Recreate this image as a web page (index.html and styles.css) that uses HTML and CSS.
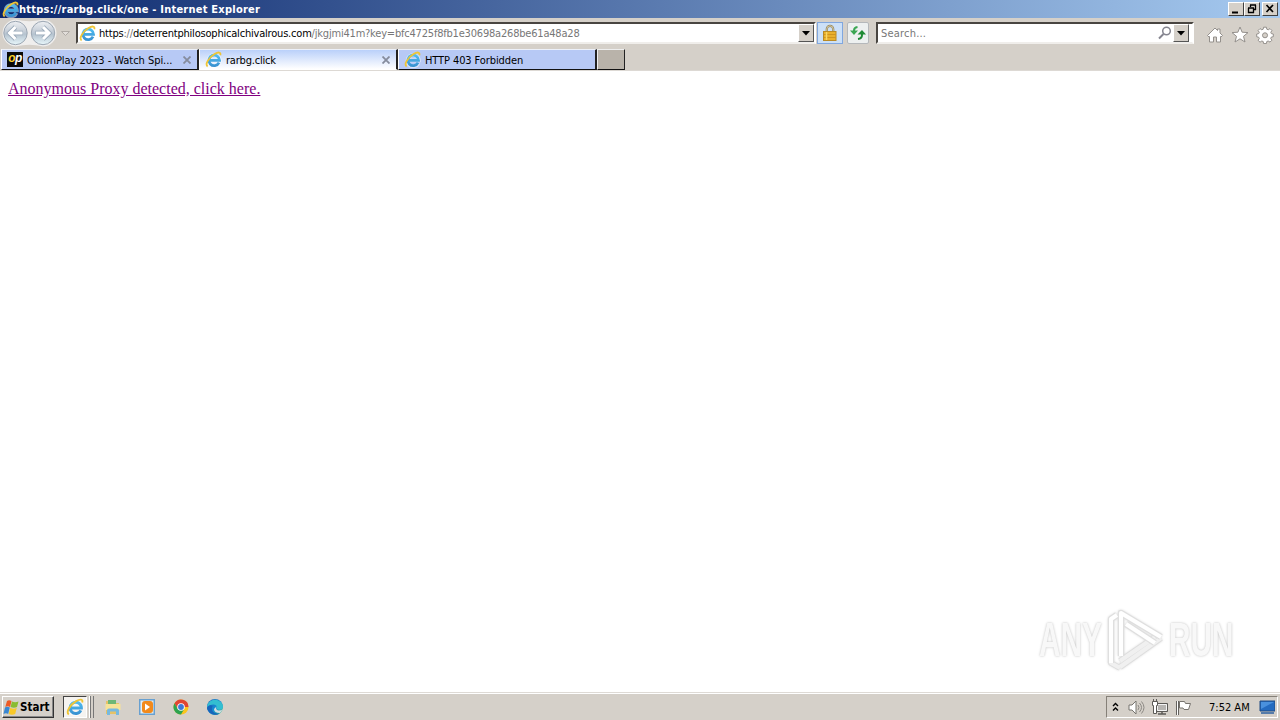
FILE: index.html
```html
<!DOCTYPE html>
<html lang="en">
  <head>
    <meta charset="UTF-8" />
    <title>https://rarbg.click/one - Internet Explorer</title>
    <link rel="stylesheet" href="styles.css">
  </head>
  <body>
    <svg class="defs" width="0" height="0">
      <defs>
        <linearGradient id="blue" x1="0" y1="0" x2="0" y2="1">
          <stop offset="0" stop-color="#4fbcf0" />
          <stop offset="1" stop-color="#3a93d2" />
        </linearGradient>
        <linearGradient id="glass" x1="0" y1="0" x2="0" y2="1">
          <stop offset="0" stop-color="#eef0f3" />
          <stop offset="0.45" stop-color="#c3ccd6" />
          <stop offset="0.55" stop-color="#b5c3cf" />
          <stop offset="1" stop-color="#e8f7fb" />
        </linearGradient>
        <linearGradient id="edge" x1="0" y1="0" x2="1" y2="1">
          <stop offset="0" stop-color="#1f55b5" />
          <stop offset="0.55" stop-color="#168ed4" />
          <stop offset="1" stop-color="#4bcf83" />
        </linearGradient>
        <symbol id="ie" viewBox="0 0 16 16">
          <path d="M13.600 11.200A5.300 5.300 0 1 1 14 8.900H5" fill="none" stroke="#fff" stroke-width="3.600" opacity=".5" />
          <path d="M13.200 11A5 5 0 1 1 13.700 8.900H5" fill="none" stroke="url(#blue)" stroke-width="2.600" />
          <path d="M2.500 14.500C-.5 13 3.500 6 9 2.800C12.500.8 15.300.8 14.400 4" fill="none" stroke="#efc535" stroke-width="1.700" />
        </symbol>
      </defs>
    </svg>

    <div class="titlebar">
      <svg class="ie-icon" width="17" height="17"><use href="#ie" /></svg>
      <span class="title">https://rarbg.click/one - Internet Explorer</span>
      <div class="window-buttons">
        <span class="win-btn"><svg width="14" height="12"><path d="M3 9.500h6" stroke="#000" stroke-width="2" /></svg></span>
        <span class="win-btn restore"><svg width="14" height="12"><path d="M5 2h6M5.500 2v2M10.500 2v5M8 6.500h3M3 5h6M3.500 5v5M8.500 5v5M3 9.500h6" stroke="#000" fill="none" stroke-width="1.300" /></svg></span>
        <span class="win-btn"><svg width="14" height="12"><path d="M3.500 2l6.500 7M10 2l-6.500 7" stroke="#000" stroke-width="1.700" /></svg></span>
      </div>
    </div>

    <div class="navbar">
      <svg class="arrows" width="74" height="30" viewBox="0 0 74 30">
        <path d="M16 1.500Q29 5 43 1.500A13.500 13.500 0 0 1 43 28.500Q29 25 16 28.500A13.500 13.500 0 0 1 16 1.500" fill="#efeeed" />
        <circle cx="15.500" cy="15" r="11.700" fill="url(#glass)" stroke="#9ca7b3" />
        <circle cx="43" cy="15" r="11.700" fill="url(#glass)" stroke="#9ca7b3" />
        <path d="M23 15H10M15.500 9l-6 6 6 6" fill="none" stroke="#98a8b8" stroke-width="4.600" />
        <path d="M22.500 15H10M15.500 9l-6 6 6 6" fill="none" stroke="#fff" stroke-width="3" />
        <path d="M35.500 15H48.500M43 9l6 6-6 6" fill="none" stroke="#98a8b8" stroke-width="4.600" />
        <path d="M36 15H48.500M43 9l6 6-6 6" fill="none" stroke="#fff" stroke-width="3" />
        <path d="M61.500 13.500h8l-4 4z" fill="#e2deda" stroke="#b0aba6" />
      </svg>
      <div class="field address">
        <svg class="ie-icon" width="17" height="17"><use href="#ie" /></svg>
        <span class="url">https<i>://</i>deterrentphilosophicalchivalrous.com<i>/jkgjmi41m?key=bfc4725f8fb1e30698a268be61a48a28</i></span>
        <span class="drop"><svg width="9" height="5"><path d="M0 0h8L4 4.500z" /></svg></span>
      </div>
      <span class="tool lock">
        <svg width="16" height="18" viewBox="0 0 16 18">
          <path d="M4.800 8V5a3.200 3.200 0 0 1 6.400 0V8" fill="none" stroke="#8f8058" stroke-width="2.200" />
          <path d="M4.800 8V5a3.200 3.200 0 0 1 6.400 0V8" fill="none" stroke="#e9deb8" stroke-width=".8" />
          <rect x="1.500" y="7.500" width="12.500" height="9" fill="#eab02c" stroke="#b98a26" />
          <path d="M2 10.500h12M2 13.500h12" stroke="#d0951f" />
          <path d="M4.500 8v8" stroke="#f8d765" stroke-width="1.500" />
        </svg>
      </span>
      <span class="tool refresh">
        <svg width="18" height="18" viewBox="0 0 18 18">
          <path d="M8.500 3Q5 3.500 5 6.500V8" fill="none" stroke="#3aa652" stroke-width="2" />
          <path d="M1 6.500h8L5 11z" fill="#3aa652" />
          <path d="M9 15Q13 14.500 13 11V9" fill="none" stroke="#208b36" stroke-width="2" />
          <path d="M8.500 10.500L13 6l4 4.500z" fill="#208b36" />
        </svg>
      </span>
      <div class="field search">
        <span class="placeholder">Search...</span>
        <svg width="14" height="14" viewBox="0 0 14 14"><circle cx="8.500" cy="5" r="3.800" fill="none" stroke="#85858f" stroke-width="1.500" /><path d="M5.500 8L1 12.500" stroke="#85858f" stroke-width="2" /></svg>
        <span class="drop"><svg width="9" height="5"><path d="M0 0h8L4 4.500z" /></svg></span>
      </div>
      <div class="commands">
        <svg width="18" height="18" viewBox="0 0 18 18"><path d="M1.500 9.500L9 2l2.500 2.500V3h2.500v4l2.500 2.500-1.500 1.500-.5-.5V16h-4v-5h-3v5h-4v-5.500l-.5.500z" fill="#fff" stroke="#94908c" /></svg>
        <svg width="18" height="18" viewBox="0 0 18 18"><path d="M9 1l2.100 5.200 5.900.4-4.500 3.700L14 16l-5-3.200L4 16l1.500-5.700L1 6.600l5.900-.4z" fill="#fff" stroke="#94908c" /></svg>
        <svg width="18" height="18" viewBox="0 0 18 18">
          <path d="M7.600 1.200h2.800l.4 2 1.400.6 1.800-1.200 1.900 1.900-1.100 1.800.5 1.300 2 .4v2.700l-2 .4-.6 1.400 1.200 1.700-1.900 1.900-1.800-1.100-1.400.5-.4 2.100H7.600l-.4-2.100-1.400-.5L4 16.200l-1.900-1.900 1.200-1.800-.6-1.300-2-.4V8l2-.4.6-1.300-1.200-1.800L4 2.600l1.800 1.200 1.400-.6z" fill="#fff" stroke="#94908c" />
          <circle cx="9" cy="9.300" r="2.500" fill="#d5d0c9" stroke="#94908c" />
        </svg>
      </div>
    </div>

    <div class="tabs">
      <div class="tab first">
        <span class="op-icon"><b>o</b>p</span>
        <span class="tab-text onion">OnionPlay 2023 - Watch Spi...</span>
        <svg class="close" width="8" height="8"><path d="M.5.500l7 7M7.500.500l-7 7" stroke="#858c9d" stroke-width="1.800" /></svg>
      </div>
      <div class="tab active">
        <svg class="ie-icon" width="17" height="17"><use href="#ie" /></svg>
        <span class="tab-text rarbg">rarbg.click</span>
        <svg class="close" width="8" height="8"><path d="M.5.500l7 7M7.500.500l-7 7" stroke="#858c9d" stroke-width="1.800" /></svg>
      </div>
      <div class="tab">
        <svg class="ie-icon" width="17" height="17"><use href="#ie" /></svg>
        <span class="tab-text forbidden">HTTP 403 Forbidden</span>
      </div>
      <div class="new-tab"></div>
    </div>

    <main class="page">
      <a href="#">Anonymous Proxy detected, click here.</a>
      <div class="watermark">
        <span class="any">ANY</span>
        <svg width="60" height="66" viewBox="0 0 60 66">
          <g fill="none" stroke-linejoin="round">
            <path d="M14 60l41-29M14 54l35-24M5 13v43l9 5" stroke="#dedede" stroke-width="6" />
            <path d="M14 60l41-29M14 54l35-24M5 13v43l9 5" stroke="#f0f0f0" stroke-width="4" />
            <path d="M5 56V12l6-4M15 49V6l40 24M20 17l29 19" stroke="#dfdfdf" stroke-width="6.500" />
            <path d="M5 56V12l6-4M15 49V6l40 24M20 17l29 19" stroke="#fff" stroke-width="4" />
          </g>
        </svg>
        <span class="run">RUN</span>
      </div>
    </main>

    <div class="taskbar">
      <div class="start">
        <svg width="17" height="17" viewBox="0 0 17 17">
          <path d="M4 2Q6 .5 8.500 2L7 8Q5 6.500 2.300 8z" fill="#ed5a25" />
          <path d="M9 2.500Q12 4 15.500 2.500L14 8Q11 9.500 7.500 8z" fill="#8abc32" />
          <path d="M2 8.500Q4 7 6.800 8.500L5.200 15Q3 13.500.5 15z" fill="#3987d2" />
          <path d="M7.300 8.800Q10.500 10.500 13.800 8.800L12.200 15Q9 16.500 5.700 15z" fill="#f9c929" />
        </svg>
        <b>Start</b>
      </div>
      <div class="task-ie"><div class="task-face"><svg width="18" height="18"><use href="#ie" /></svg></div><i></i><i></i></div>
      <div class="launch">
        <svg width="18" height="18" viewBox="0 0 18 18">
          <path d="M2 3h5l1 2h7v11H2z" fill="#e6c267" />
          <path d="M4 2h8v4H4z" fill="#6db776" />
          <path d="M1.500 6h15v6h-15z" fill="#f6e398" />
          <path d="M3 17v-4.500q0-2 2-2h8q2 0 2 2V17h-3v-3.500H6V17z" fill="#77b9df" />
        </svg>
        <svg width="18" height="18" viewBox="0 0 18 18">
          <rect x="1" y="1" width="16" height="16" fill="#68a0d0" />
          <rect x="2.500" y="2.500" width="13" height="13" fill="#e4eff5" />
          <rect x="4" y="3" width="11" height="12" rx="3" fill="#f28a1c" />
          <path d="M7 5.500v7l5-3.500z" fill="#fff" />
        </svg>
        <svg width="18" height="18" viewBox="0 0 18 18">
          <circle cx="9" cy="9" r="7.500" fill="#fbc51d" />
          <path d="M9 9H16.500A7.500 7.500 0 0 0 2.500 5.250L5.700 10.900z" fill="#e04434" />
          <path d="M2.500 5.250A7.500 7.500 0 0 0 9 16.500L12.200 10.900H5.800z" fill="#2da350" />
          <circle cx="9" cy="9" r="3.800" fill="#fff" />
          <circle cx="9" cy="9" r="2.900" fill="#3c78d8" />
        </svg>
        <svg width="18" height="18" viewBox="0 0 18 18">
          <circle cx="9" cy="9" r="8" fill="url(#edge)" />
          <path d="M1 9C2 0 15-1 17 8.500C17 13 10 12 10.500 10C12 8 8 4 1 9" fill="#33bed1" />
          <path d="M6.500 8C4 13 9 17 14 15C10 19 2 16 1 10Q3 6 6.500 8" fill="#1765bb" />
          <path d="M10.500 8.500Q9 11 12 12.500Q15 13 17 11L14 15Q8 15 8 11z" fill="#d6dce0" />
        </svg>
      </div>
      <div class="tray">
        <svg width="7" height="10"><path d="M1 4l2.500-2.500L6 4M1 8.500L3.500 6 6 8.500" fill="none" stroke="#000" stroke-width="1.400" /></svg>
        <svg width="18" height="17" viewBox="0 0 18 17"><path d="M2 6h3l4-4v13l-4-4H2z" fill="#fff" stroke="#77746f" /><path d="M11 6q2 2.500 0 5M12.500 4q4 4.500 0 9M14.500 2.500q5 6 0 12" fill="none" stroke="#8c8984" /></svg>
        <svg width="18" height="17" viewBox="0 0 18 17"><path d="M5.500 4.500h11v8h-11z" fill="#b7b5b2" stroke="#5c5a57" /><path d="M6.500 5.500h9v6h-9z" fill="none" stroke="#f4f4f4" /><path d="M7 15h8M11 13v2" stroke="#5c5a57" stroke-width="1.500" /><path d="M1.500 2.500h5v4h-1v8h-3v-8h-1zM2.500 0v2M5.500 0v2" fill="#fff" stroke="#5c5a57" /></svg>
        <svg width="18" height="17" viewBox="0 0 18 17"><path d="M2.500 2v14" stroke="#65625e" stroke-width="3" /><path d="M2.500 2v14" stroke="#fff" /><path d="M4.500 2.500h5l1 2h5l-2 6H9l-1-1.500H4.500z" fill="#fff" stroke="#77746f" /></svg>
        <span class="clock">7:52 AM</span>
        <svg width="16" height="16" viewBox="0 0 16 16"><path d="M1 2h15v10H1z" fill="#246bc0" stroke="#204c82" /><path d="M2 3h13L2 10z" fill="#4a91dd" /><path d="M2 14h13" stroke="#567caa" stroke-width="2" /></svg>
      </div>
    </div>
  </body>
</html>
```

FILE: styles.css
```css
* {
  box-sizing: border-box;
}
body {
  margin: 0;
  width: 1280px;
  height: 720px;
  overflow: hidden;
  display: flex;
  flex-direction: column;
  background: #d5d0c9;
  color: #000;
  font-family: "DejaVu Sans Condensed", "DejaVu Sans", sans-serif;
  font-stretch: condensed;
  font-size: 11px;
  white-space: nowrap;
}
svg {
  display: block;
  flex: none;
}
.defs {
  position: absolute;
}
i {
  font-style: normal;
}
.titlebar {
  height: 18px;
  display: flex;
  align-items: center;
  padding: 0 2px;
  background: linear-gradient(90deg, #0b276c, #a6caf0);
}
.title {
  width: 241px;
  color: #fff;
  font-weight: bold;
  font-size: 11px;
  letter-spacing: 0.23px;
}
.window-buttons {
  display: flex;
  margin-left: auto;
}
.win-btn {
  width: 16px;
  height: 14px;
  border: 1px solid;
  border-color: #fff #404040 #404040 #fff;
  background: #d5d0c9;
  overflow: hidden;
}
.restore {
  margin-right: 2px;
}
.navbar {
  height: 30px;
  display: flex;
  align-items: center;
}
.arrows {
  margin-right: 2px;
}
.field {
  height: 22px;
  display: flex;
  align-items: center;
  background: #fff;
  border: 2px solid;
  border-color: #494541 #fff #f0eeeb #494541;
}
.address {
  width: 740px;
  padding-left: 1px;
}
.url {
  margin: 1px 0 0 3px;
  letter-spacing: -0.2px;
}
.url i,
.placeholder {
  color: #777;
}
.drop {
  width: 16px;
  height: 18px;
  display: flex;
  align-items: center;
  justify-content: center;
  background: #d5d0c9;
  border: 1px solid;
  border-color: #fff #555 #555 #fff;
}
.address .drop {
  margin-left: auto;
}
.tool {
  display: flex;
  align-items: center;
  justify-content: center;
  height: 22px;
}
.lock {
  width: 26px;
  margin-left: 1px;
  background: #cce0f7;
  border: 1px solid #80a7df;
}
.refresh {
  width: 22px;
  margin: 0 7px 0 4px;
  background: #edf0f0;
  border: 1px solid #b5b8bb;
  border-radius: 2px;
}
.search {
  width: 318px;
  padding: 0 3px;
}
.placeholder {
  flex: 1;
  margin-top: 1px;
  letter-spacing: 0.2px;
}
.search .drop {
  margin-left: 1px;
}
.commands {
  display: flex;
  gap: 7px;
  margin: 3px 0 0 12px;
}
.tabs {
  height: 23px;
  display: flex;
  padding: 1px 0 1px 1px;
  border-bottom: 1px solid #ddd9d4;
}
.tab {
  width: 199px;
  height: 21px;
  display: flex;
  align-items: center;
  padding: 0 6px 0 5px;
  background: #b7c9f5;
  border: 1px solid;
  border-color: #edf1fa #222 #111 #fff;
  border-right-width: 2px;
}
.first {
  width: 198px;
}
.active {
  background: linear-gradient(#bad0fa, #fff);
  border-bottom-color: #fff;
}
.op-icon {
  width: 16px;
  height: 15px;
  background: #090909;
  color: #fff;
  font: italic bold 12px/12px "Liberation Sans", sans-serif;
  letter-spacing: -0.5px;
  text-align: center;
}
.op-icon b {
  color: #ffd12b;
}
.tab-text {
  margin: 1px 0 0 4px;
  letter-spacing: -0.1px;
}
.onion {
  letter-spacing: -0.04px;
}
.rarbg {
  letter-spacing: -0.2px;
}
.close {
  margin-left: auto;
}
.new-tab {
  width: 28px;
  height: 21px;
  background: #b9b3aa;
  border: 1px solid;
  border-color: #eee #222 #111 #eee;
}
.page {
  height: 621px;
  flex: none;
  padding: 8px;
  display: flex;
  flex-direction: column;
  align-items: flex-start;
  justify-content: space-between;
  background: #fff;
  font: 16px/19px "Liberation Serif", serif;
}
.page a {
  color: #800080;
}
.watermark {
  display: flex;
  align-items: center;
  align-self: flex-end;
  width: 203px;
  height: 66px;
  margin: 0 32px 11px 0;
  font: bold 48px/70px "Liberation Sans", sans-serif;
  color: #f8f8f8;
  text-shadow: 0 0 3px #bbb;
}
.any,
.run {
  width: 64px;
  flex: none;
  transform: scaleX(0.62);
  transform-origin: left;
}
.any {
  margin-left: 2px;
}
.watermark svg {
  margin: 0 3px;
  filter: drop-shadow(0 0 1px #ddd);
}
.taskbar {
  height: 28px;
  flex: none;
  display: flex;
  align-items: center;
  padding: 1px 2px 0;
  border-top: 1px solid #dedad5;
  box-shadow: inset 0 1px #fff;
}
.start {
  width: 52px;
  height: 22px;
  display: flex;
  align-items: center;
  border: 1px solid;
  border-color: #fff #333 #333 #fff;
  box-shadow: inset -1px -1px #888;
}
.start b {
  font-size: 11.5px;
}
.task-ie {
  display: flex;
  gap: 2px;
  width: 31px;
  height: 22px;
  margin-left: 9px;
}
.task-face {
  width: 25px;
  padding: 1px 2px;
  background: #f5f3f0;
  border: 1px solid;
  border-color: #444 #fff #fff #444;
}
.task-ie i {
  width: 2px;
  background: #fff;
  border-right: 1px solid #777;
}
.launch {
  display: flex;
  gap: 16px;
  margin-left: 10px;
}
.tray {
  display: flex;
  align-items: center;
  width: 172px;
  height: 22px;
  margin-left: auto;
  padding-left: 5px;
  border: 1px solid;
  border-color: #858078 #fff #fff #858078;
}
.tray svg:nth-child(2) {
  margin-left: 8px;
}
.tray svg:nth-child(3),
.tray svg:nth-child(4) {
  margin-left: 6px;
}
.clock {
  width: 42px;
  margin: 0 8px 0 16px;
}
```
